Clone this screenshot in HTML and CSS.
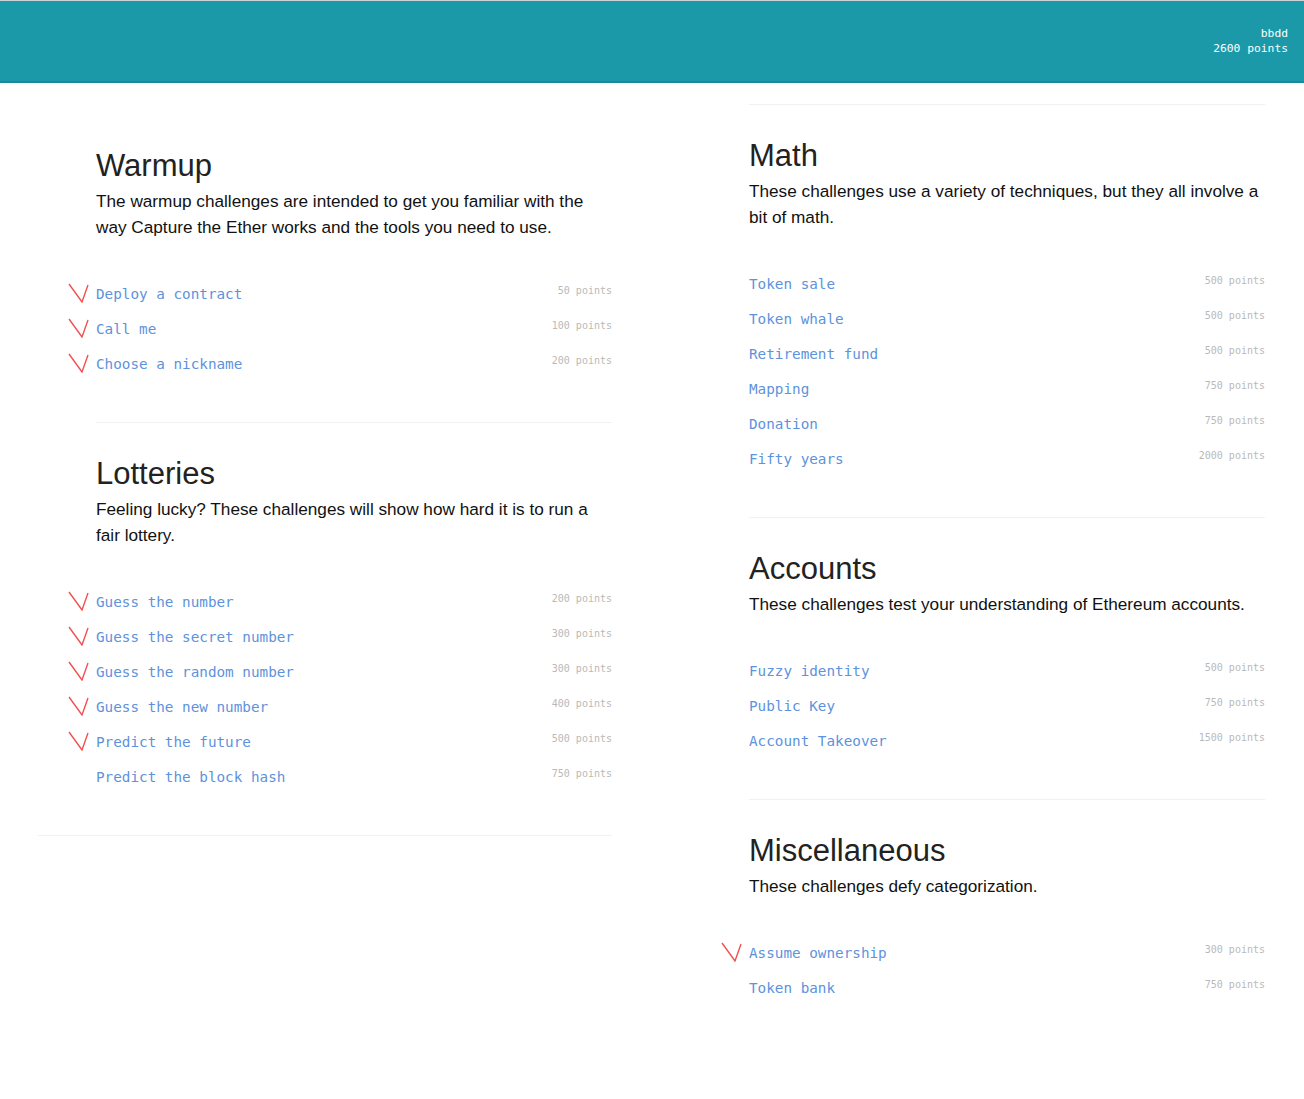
FILE: index.html
```html
<!DOCTYPE html>
<html>
<head>
<meta charset="utf-8">
<link rel="stylesheet" href="styles.css">
</head>
<body>
<header class="topbar">
  <div class="user">
    <div>bbdd</div>
    <div>2600 points</div>
  </div>
</header>
<main class="columns">
  <div class="col col-left">
    <section class="cat cat-first">
      <h2>Warmup</h2>
      <p>The warmup challenges are intended to get you familiar with the way Capture the Ether works and the tools you need to use.</p>
      <ul class="items">
        <li class="done"><a>Deploy a contract</a><span class="pts">50 points</span></li>
        <li class="done"><a>Call me</a><span class="pts">100 points</span></li>
        <li class="done"><a>Choose a nickname</a><span class="pts">200 points</span></li>
      </ul>
    </section>
    <section class="cat">
      <h2>Lotteries</h2>
      <p>Feeling lucky? These challenges will show how hard it is to run a fair lottery.</p>
      <ul class="items">
        <li class="done"><a>Guess the number</a><span class="pts">200 points</span></li>
        <li class="done"><a>Guess the secret number</a><span class="pts">300 points</span></li>
        <li class="done"><a>Guess the random number</a><span class="pts">300 points</span></li>
        <li class="done"><a>Guess the new number</a><span class="pts">400 points</span></li>
        <li class="done"><a>Predict the future</a><span class="pts">500 points</span></li>
        <li><a>Predict the block hash</a><span class="pts">750 points</span></li>
      </ul>
    </section>
    <div class="rule rule-wide"></div>
  </div>
  <div class="col col-right">
    <section class="cat">
      <h2>Math</h2>
      <p>These challenges use a variety of techniques, but they all involve a bit of math.</p>
      <ul class="items">
        <li><a>Token sale</a><span class="pts">500 points</span></li>
        <li><a>Token whale</a><span class="pts">500 points</span></li>
        <li><a>Retirement fund</a><span class="pts">500 points</span></li>
        <li><a>Mapping</a><span class="pts">750 points</span></li>
        <li><a>Donation</a><span class="pts">750 points</span></li>
        <li><a>Fifty years</a><span class="pts">2000 points</span></li>
      </ul>
    </section>
    <section class="cat">
      <h2>Accounts</h2>
      <p>These challenges test your understanding of Ethereum accounts.</p>
      <ul class="items">
        <li><a>Fuzzy identity</a><span class="pts">500 points</span></li>
        <li><a>Public Key</a><span class="pts">750 points</span></li>
        <li><a>Account Takeover</a><span class="pts">1500 points</span></li>
      </ul>
    </section>
    <section class="cat">
      <h2>Miscellaneous</h2>
      <p>These challenges defy categorization.</p>
      <ul class="items">
        <li class="done"><a>Assume ownership</a><span class="pts">300 points</span></li>
        <li><a>Token bank</a><span class="pts">750 points</span></li>
      </ul>
    </section>
  </div>
</main>
</body>
</html>
```
FILE: styles.css
```css
* { box-sizing: border-box; }
html, body { margin: 0; padding: 0; background: #fff; }
body { font-family: "Liberation Sans", Arial, sans-serif; color: #111; }

.topbar {
  height: 83px;
  background: #1c99a8;
  border-top: 1px solid #c9d3d6;
  border-bottom: 2px solid #178b98;
  display: flex;
  justify-content: flex-end;
  padding: 25px 16px 0 0;
}
.user {
  font-family: "DejaVu Sans Mono", monospace;
  font-size: 11.3px;
  line-height: 15px;
  color: #fff;
  text-align: right;
}

.columns {
  display: grid;
  grid-template-columns: 652px 652px;
}
.col-left { padding: 31px 40px 0 96px; }
.col-right { padding: 21px 39px 0 97px; }

.cat {
  border-top: 1px solid #f1f1f1;
  padding: 34px 0 41px;
}
.cat-first { border-top-color: transparent; }

.cat h2 {
  margin: 0;
  font-size: 31px;
  line-height: 34px;
  font-weight: normal;
  color: #222;
}
.cat p {
  margin: 5px 0 36px;
  font-size: 17.2px;
  line-height: 26px;
  color: #111;
}

.items { list-style: none; margin: 0; padding: 0; }
.items li {
  position: relative;
  height: 35px;
  display: flex;
  justify-content: space-between;
  align-items: center;
}
.items a {
  font-family: "DejaVu Sans Mono", monospace;
  font-size: 14.3px;
  color: #5e92dc;
}
.items .pts {
  font-family: "DejaVu Sans Mono", monospace;
  font-size: 10px;
  color: #b9b9b9;
  position: relative;
  top: -3px;
}
.items li.done::before {
  content: "";
  position: absolute;
  left: -28px;
  top: 7px;
  width: 22px;
  height: 20px;
  background: url("data:image/svg+xml;utf8,<svg xmlns='http://www.w3.org/2000/svg' width='22' height='20' viewBox='0 0 22 20'><polyline points='1,1 14,19 20,2' fill='none' stroke='%23f25050' stroke-width='1.4'/></svg>") no-repeat;
}

.rule {
  border-top: 1px solid #f1f1f1;
}
.rule-wide { margin-left: -58px; }
```
